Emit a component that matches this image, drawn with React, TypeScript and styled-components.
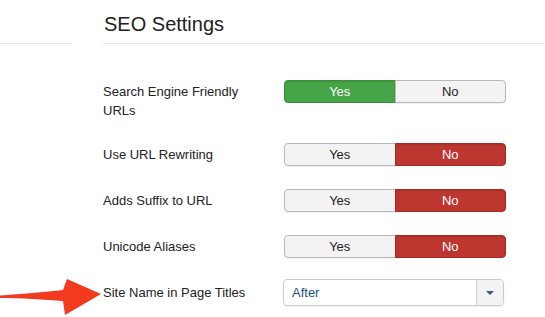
import React from "react";
import styled, { createGlobalStyle } from "styled-components";

const Global = createGlobalStyle`
  html, body { margin: 0; padding: 0; background: #fff; }
  body { font-family: "Liberation Sans", Arial, Helvetica, sans-serif; color: #333; width: 545px; height: 317px; overflow: hidden; }
`;

const Page = styled.div`
  position: relative;
  display: flex;
  width: 545px;
  height: 317px;
`;

const Sidebar = styled.div`
  width: 72px;
  flex: none;
`;

const SidebarHead = styled.div`
  height: 44px;
  box-sizing: border-box;
  border-bottom: 1px solid #e6e6e6;
`;

const Main = styled.div`
  flex: 1;
  margin-left: 31px;
  display: flex;
  flex-direction: column;
`;

const Title = styled.h2`
  margin: 0;
  height: 44px;
  box-sizing: border-box;
  border-bottom: 1px solid #e6e6e6;
  font-size: 20px;
  font-weight: normal;
  color: #222;
  line-height: 20px;
  padding: 14px 0 0 1px;
`;

const Form = styled.div`
  display: flex;
  flex-direction: column;
  gap: 23px;
  padding: 36px 0 0 0;
`;

const Row = styled.div<{ $shift?: number }>`
  display: flex;
  align-items: flex-start;
  margin-top: ${(p) => p.$shift ?? 0}px;
`;

const Label = styled.div<{ $pad?: number }>`
  width: 181px;
  flex: none;
  font-size: 13px;
  line-height: 19px;
  padding-top: ${(p) => p.$pad ?? 2}px;
  color: #222;
`;

const Toggle = styled.div`
  display: flex;
  width: 222px;
  height: 23px;
`;

const ToggleBtn = styled.div<{ $on: boolean; $tone: "green" | "red"; $side: "l" | "r" }>`
  flex: 1;
  display: flex;
  align-items: center;
  justify-content: center;
  font-size: 13px;
  box-sizing: border-box;
  border: 1px solid
    ${(p) => (p.$on ? (p.$tone === "green" ? "#3b8f3b" : "#a32d26") : "#b8b8b8")};
  ${(p) => (p.$side === "l" ? "border-radius: 4px 0 0 4px;" : "border-radius: 0 4px 4px 0;")}
  ${(p) => (p.$side === "r" ? "margin-left: -1px;" : "")}
  background: ${(p) => (p.$on ? (p.$tone === "green" ? "#46a546" : "#bd362f") : "#f3f3f3")};
  color: ${(p) => (p.$on ? "#fff" : "#222")};
  box-shadow: ${(p) => (p.$on ? "inset 0 1px 2px rgba(0,0,0,0.12)" : "0 1px 1px rgba(0,0,0,0.06)")};
`;

const Select = styled.div`
  display: flex;
  width: 221px;
  height: 27px;
  box-sizing: border-box;
  border: 1px solid #ccc;
  border-radius: 4px;
  box-shadow: 0 1px 2px rgba(0,0,0,0.08);
  margin-left: -1px;
`;

const SelectValue = styled.div`
  flex: 1;
  display: flex;
  align-items: center;
  padding-left: 8px;
  font-size: 13px;
  color: #24527d;
`;

const SelectCaret = styled.div`
  width: 26px;
  flex: none;
  border-left: 1px solid #ccc;
  background: #f3f3f3;
  border-radius: 0 3px 3px 0;
  display: flex;
  align-items: center;
  justify-content: center;
`;

const Caret = styled.span`
  width: 0;
  height: 0;
  border-left: 4px solid transparent;
  border-right: 4px solid transparent;
  border-top: 4px solid #2d5c85;
`;

const Arrow = styled.svg`
  position: absolute;
  left: 0;
  top: 270px;
`;

type ToggleRow = { label: React.ReactNode; yes: boolean };

const rows: ToggleRow[] = [
  { label: <>Search Engine Friendly<br />URLs</>, yes: true },
  { label: "Use URL Rewriting", yes: false },
  { label: "Adds Suffix to URL", yes: false },
  { label: "Unicode Aliases", yes: false },
];

export default function App() {
  return (
    <Page>
      <Global />
      <Sidebar>
        <SidebarHead />
      </Sidebar>
      <Main>
        <Title>SEO Settings</Title>
        <Form>
          {rows.map((r, i) => (
            <Row key={i}>
              <Label>{r.label}</Label>
              <Toggle>
                <ToggleBtn $side="l" $on={r.yes} $tone="green">Yes</ToggleBtn>
                <ToggleBtn $side="r" $on={!r.yes} $tone="red">No</ToggleBtn>
              </Toggle>
            </Row>
          ))}
          <Row $shift={-2}>
            <Label $pad={4}>Site Name in Page Titles</Label>
            <Select>
              <SelectValue>After</SelectValue>
              <SelectCaret>
                <Caret />
              </SelectCaret>
            </Select>
          </Row>
        </Form>
      </Main>
      <Arrow width="104" height="47" viewBox="0 0 104 47">
        <path
          d="M0 25.5 C20 24 45 22 63 20 L67 9 L101 24 L65 45 L63 31 C45 29.5 20 28 0 28 Z"
          fill="#f23a1f"
        />
      </Arrow>
    </Page>
  );
}
